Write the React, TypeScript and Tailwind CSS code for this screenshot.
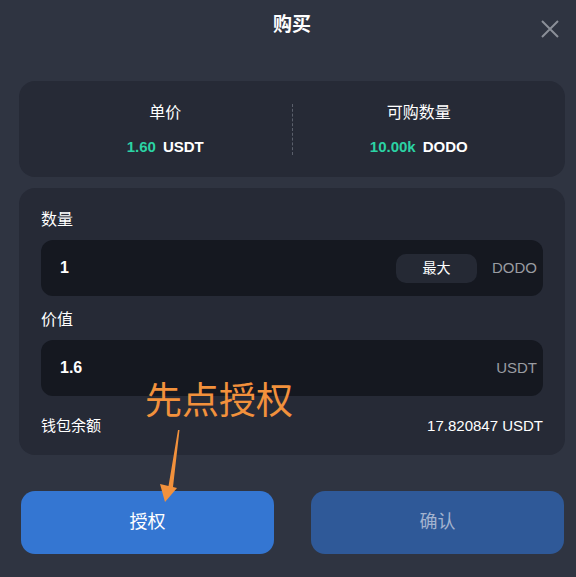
import React from "react";

const font = { fontFamily: '"Liberation Sans", "Noto Sans CJK SC", sans-serif' };

const Stat: React.FC<{ label: string; value: string; unit: string }> = ({ label, value, unit }) => (
  <div className="flex flex-col items-center">
    <div className="text-[16px] leading-6 text-white">{label}</div>
    <div className="mt-3 text-[15px] leading-5 font-bold">
      <span className="text-[#2bd3a4]">{value}</span>
      <span className="ml-[7px] text-white">{unit}</span>
    </div>
  </div>
);

const App: React.FC = () => {
  return (
    <div className="relative w-[576px] h-[577px] bg-[#2f3441] text-white overflow-hidden" style={font}>
      <div className="ml-[19px] w-[546px]">
        {/* Header */}
        <div className="relative h-[50px] flex items-center justify-center">
          <h1 className="text-[19px] font-bold">购买</h1>
          <button className="absolute right-[4px] top-[18px] text-[#8b8f98]">
            <svg width="22" height="22" viewBox="0 0 22 22" fill="none" stroke="currentColor" strokeWidth="2">
              <path d="M3 3 L19 19 M19 3 L3 19" />
            </svg>
          </button>
        </div>

        {/* Price card */}
        <div className="mt-[31px] h-[96px] rounded-2xl bg-[#262a36] px-5 grid grid-cols-[1fr_auto_1fr] items-center">
          <Stat label="单价" value="1.60" unit="USDT" />
          <div className="h-[51px] border-l border-dashed border-[#5a5f6b]" />
          <Stat label="可购数量" value="10.00k" unit="DODO" />
        </div>

        {/* Form card */}
        <div className="relative mt-[11px] rounded-2xl bg-[#262a36] px-[22px] pt-5 pb-[19px]">
          <div className="text-[16px] leading-6">数量</div>
          <div className="mt-2 h-[56px] rounded-xl bg-[#151820] flex items-center pl-[19px] pr-[6px]">
            <span className="flex-1 text-[16px] font-bold">1</span>
            <button className="w-[81px] h-[29px] rounded-[10px] bg-[#252934] text-[14px] text-white">最大</button>
            <span className="ml-[15px] text-[15px] text-[#9a9ca2]">DODO</span>
          </div>

          <div className="mt-3 text-[16px] leading-6">价值</div>
          <div className="mt-2 h-[56px] rounded-xl bg-[#151820] flex items-center pl-[19px] pr-[6px]">
            <span className="flex-1 text-[16px] font-bold">1.6</span>
            <span className="text-[15px] text-[#9a9ca2]">USDT</span>
          </div>

          <div className="mt-5 flex items-center justify-between text-[15px] leading-5">
            <span>钱包余额</span>
            <span className="font-medium">17.820847 USDT</span>
          </div>

          {/* annotation */}
          <div className="absolute left-[126px] top-[195px] text-[37px] leading-none text-[#f2913c]">
            先点授权
          </div>
        </div>

        {/* Buttons */}
        <div className="mt-[36px] pl-[2px] flex gap-[37px]">
          <button className="w-[253px] h-[63px] rounded-[14px] bg-[#3476d2] text-[18px] text-white">授权</button>
          <button className="w-[253px] h-[63px] rounded-[14px] bg-[#2f5998] text-[18px] text-[#a3b3cf]">确认</button>
        </div>
      </div>

      {/* arrow annotation */}
      <svg className="absolute left-0 top-0 pointer-events-none" width="576" height="577">
        <polygon points="178,430 179.5,430 173,487 177,488 165,502 160,484 168.5,486" fill="#f2913c" />
      </svg>
    </div>
  );
};

export default App;
